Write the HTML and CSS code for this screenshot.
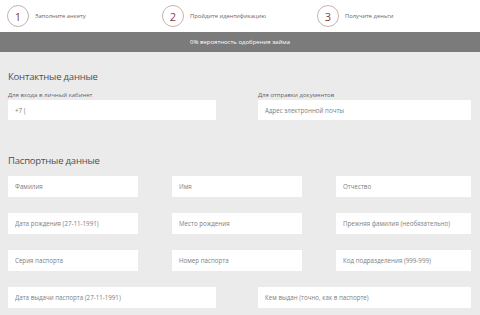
FILE: index.html
```html
<!DOCTYPE html>
<html lang="ru">
<head>
    <meta charset="UTF-8">
    <meta name="viewport" content="width=device-width, initial-scale=1.0">
    <title>Заявка на заём</title>
    <link rel="stylesheet" href="styles.css">
</head>
<body>
    <div class="steps">
        <div class="step"><span class="step-num">1</span><span class="step-text">Заполните анкету</span></div>
        <div class="step"><span class="step-num">2</span><span class="step-text">Пройдите идентификацию</span></div>
        <div class="step"><span class="step-num">3</span><span class="step-text">Получите деньги</span></div>
    </div>
    <div class="chance">0% вероятность одобрения займа</div>

    <form class="form">
        <h3 class="section-title">Контактные данные</h3>
        <div class="grid-two">
            <div class="field">
                <label for="phone">Для входа в личный кабинет</label>
                <input type="text" id="phone" value="+7 (">
            </div>
            <div class="field">
                <label for="email">Для отправки документов</label>
                <input type="text" id="email" placeholder="Адрес электронной почты">
            </div>
        </div>

        <h3 class="section-title passport-title">Паспортные данные</h3>
        <div class="grid-three">
            <input type="text" placeholder="Фамилия">
            <input type="text" placeholder="Имя">
            <input type="text" placeholder="Отчество">
            <input type="text" placeholder="Дата рождения (27-11-1991)">
            <input type="text" placeholder="Место рождения">
            <input type="text" placeholder="Прежняя фамилия (необязательно)">
            <input type="text" placeholder="Серия паспорта">
            <input type="text" placeholder="Номер паспорта">
            <input type="text" placeholder="Код подразделения (999-999)">
        </div>
        <div class="grid-two last-row">
            <input type="text" placeholder="Дата выдачи паспорта (27-11-1991)">
            <input type="text" placeholder="Кем выдан (точно, как в паспорте)">
        </div>
    </form>
</body>
</html>
```
FILE: styles.css
```css
body {
    margin: 0;
    font-family: "Open Sans", "Liberation Sans", sans-serif;
    background-color: #ebebeb;
    color: #555;
}
.steps {
    display: flex;
    height: 32px;
    background-color: #fff;
    padding-left: 7px;
}
.step {
    display: flex;
    align-items: center;
    width: 155px;
}
.step-num {
    width: 20px;
    height: 20px;
    border: 1px solid #c9b1b1;
    border-radius: 50%;
    display: flex;
    align-items: center;
    justify-content: center;
    font-size: 11px;
    color: #7f4040;
    margin-right: 6px;
}
.step-text {
    font-size: 5.8px;
    color: #666;
}
.chance {
    height: 20px;
    line-height: 20px;
    background-color: #7b7b7b;
    color: #fff;
    text-align: center;
    font-size: 6px;
}
.form {
    padding: 0 9px 0 8px;
}
.section-title {
    margin: 18px 0 7px;
    font-size: 9.5px;
    letter-spacing: -0.2px;
    line-height: 14px;
    font-weight: normal;
    color: #505050;
}
.passport-title {
    margin-top: 34px;
    margin-bottom: 8px;
}
.grid-two {
    display: grid;
    grid-template-columns: 208px 1fr;
    column-gap: 42px;
}
.grid-three {
    display: grid;
    grid-template-columns: 130px 130px 1fr;
    column-gap: 34px;
    row-gap: 16px;
}
.last-row {
    margin-top: 16px;
}
.field label {
    display: block;
    font-size: 6px;
    line-height: 8px;
    color: #666;
    margin-bottom: 1px;
}
input[type="text"] {
    display: block;
    width: 100%;
    box-sizing: border-box;
    height: 21px;
    border: none;
    padding: 0 7px;
    background-color: #fff;
    font-family: inherit;
    font-size: 6.2px;
    color: #7a7a7a;
}
.field input[type="text"] {
    height: 20px;
}
input::placeholder {
    color: #7e7e7e;
}
```
